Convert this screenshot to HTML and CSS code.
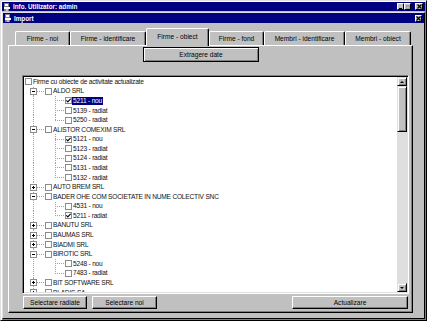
FILE: index.html
```html
<!DOCTYPE html>
<html lang="ro">
<head>
  <meta charset="UTF-8">
  <title>Import</title>
  <link rel="stylesheet" href="styles.css">
</head>
<body>
  <div class="app">
    <div class="titlebar main">
      <svg class="ticon" width="8" height="8" viewBox="0 0 8 8">
        <rect x="1" y="0" width="5" height="8" fill="#808080"/>
        <rect x="2" y="1" width="3" height="2" fill="#fff"/>
        <rect x="1" y="4" width="6" height="2" fill="#fff"/>
        <rect x="3" y="6" width="2" height="2" fill="#c0c0c0"/>
      </svg>
      <span>Info. Utilizator: admin</span>
      <div class="tbtns">
        <span class="tb"><i class="g-min"></i></span>
        <span class="tb off"><i class="g-max"></i></span>
        <span class="tb x">
          <svg width="5" height="5" viewBox="0 0 5 5"><path d="M0.5 0.5 L4.5 4.5 M4.5 0.5 L0.5 4.5" stroke="#000" stroke-width="1.2"/></svg>
        </span>
      </div>
    </div>

    <div class="child">
      <div class="titlebar sub">
        <svg class="ticon" width="8" height="8" viewBox="0 0 8 8">
          <rect x="1" y="0" width="5" height="8" fill="#808080"/>
          <rect x="2" y="1" width="3" height="2" fill="#fff"/>
          <rect x="1" y="4" width="6" height="2" fill="#fff"/>
          <rect x="3" y="6" width="2" height="2" fill="#c0c0c0"/>
        </svg>
        <span>Import</span>
        <div class="tbtns">
          <span class="tb">
            <svg width="5" height="5" viewBox="0 0 5 5"><path d="M0.5 0.5 L4.5 4.5 M4.5 0.5 L0.5 4.5" stroke="#000" stroke-width="1.2"/></svg>
          </span>
        </div>
      </div>

      <div class="content">
        <div class="tabs">
          <div class="tab t1">Firme - noi</div>
          <div class="tab t2">Firme - identificare</div>
          <div class="tab t3 active">Firme - obiect</div>
          <div class="tab t4">Firme - fond</div>
          <div class="tab t5">Membri - identificare</div>
          <div class="tab t6">Membri - obiect</div>
        </div>

        <div class="panel">
          <button class="btn default extract">Extragere date</button>

          <div class="listbox">
            <div class="tree">
              <div class="row"><span class="cb root"></span><span class="lbl">Firme cu obiecte de activitate actualizate</span></div>

              <div class="row"><span class="ga br"><span class="exp"></span></span><span class="cb"></span><span class="lbl">ALDO SRL</span></div>
              <div class="row"><span class="ga"></span><span class="gb"></span><span class="cb on"><svg width="5" height="5" viewBox="0 0 5 5"><path d="M0.3 2.3 L1.8 3.9 L4.7 0.8" stroke="#000" stroke-width="1.2" fill="none"/></svg></span><span class="lbl sel">5211 - nou</span></div>
              <div class="row"><span class="ga"></span><span class="gb"></span><span class="cb"></span><span class="lbl">5139 - radiat</span></div>
              <div class="row"><span class="ga"></span><span class="gb end"></span><span class="cb"></span><span class="lbl">5250 - radiat</span></div>

              <div class="row"><span class="ga br"><span class="exp"></span></span><span class="cb"></span><span class="lbl">ALISTOR COMEXIM SRL</span></div>
              <div class="row"><span class="ga"></span><span class="gb"></span><span class="cb on"><svg width="5" height="5" viewBox="0 0 5 5"><path d="M0.3 2.3 L1.8 3.9 L4.7 0.8" stroke="#000" stroke-width="1.2" fill="none"/></svg></span><span class="lbl">5121 - nou</span></div>
              <div class="row"><span class="ga"></span><span class="gb"></span><span class="cb"></span><span class="lbl">5123 - radiat</span></div>
              <div class="row"><span class="ga"></span><span class="gb"></span><span class="cb"></span><span class="lbl">5124 - radiat</span></div>
              <div class="row"><span class="ga"></span><span class="gb"></span><span class="cb"></span><span class="lbl">5131 - radiat</span></div>
              <div class="row"><span class="ga"></span><span class="gb end"></span><span class="cb"></span><span class="lbl">5132 - radiat</span></div>

              <div class="row"><span class="ga br"><span class="exp plus"></span></span><span class="cb"></span><span class="lbl">AUTO BREM SRL</span></div>

              <div class="row"><span class="ga br"><span class="exp"></span></span><span class="cb"></span><span class="lbl">BADER OHE COM SOCIETATE IN NUME COLECTIV SNC</span></div>
              <div class="row"><span class="ga"></span><span class="gb"></span><span class="cb"></span><span class="lbl">4531 - nou</span></div>
              <div class="row"><span class="ga"></span><span class="gb end"></span><span class="cb on"><svg width="5" height="5" viewBox="0 0 5 5"><path d="M0.3 2.3 L1.8 3.9 L4.7 0.8" stroke="#000" stroke-width="1.2" fill="none"/></svg></span><span class="lbl">5211 - radiat</span></div>

              <div class="row"><span class="ga br"><span class="exp plus"></span></span><span class="cb"></span><span class="lbl">BANUTU SRL</span></div>
              <div class="row"><span class="ga br"><span class="exp plus"></span></span><span class="cb"></span><span class="lbl">BAUMAS SRL</span></div>
              <div class="row"><span class="ga br"><span class="exp plus"></span></span><span class="cb"></span><span class="lbl">BIADMI SRL</span></div>

              <div class="row"><span class="ga br"><span class="exp"></span></span><span class="cb"></span><span class="lbl">BIROTIC SRL</span></div>
              <div class="row"><span class="ga"></span><span class="gb"></span><span class="cb"></span><span class="lbl">5248 - nou</span></div>
              <div class="row"><span class="ga"></span><span class="gb end"></span><span class="cb"></span><span class="lbl">7483 - radiat</span></div>

              <div class="row"><span class="ga br"><span class="exp plus"></span></span><span class="cb"></span><span class="lbl">BIT SOFTWARE SRL</span></div>
              <div class="row"><span class="ga br"><span class="exp plus"></span></span><span class="cb"></span><span class="lbl">BLADIS SA</span></div>
            </div>

            <div class="scrollbar">
              <span class="sbtn"><i class="arr up"></i></span>
              <span class="thumb"></span>
              <span class="track"></span>
              <span class="sbtn"><i class="arr down"></i></span>
            </div>
          </div>

          <div class="actions">
            <button class="btn w-rad">Selectare radiate</button>
            <button class="btn w-noi">Selectare noi</button>
            <button class="btn w-act">Actualizare</button>
          </div>
        </div>
      </div>
    </div>
  </div>
</body>
</html>
```

FILE: styles.css
```css
* {
  box-sizing: border-box;
}

body {
  margin: 0;
  background: #c0c0c0;
  font-family: "Liberation Sans", Arial, sans-serif;
  font-size: 6.6px;
  color: #000;
  overflow: hidden;
}

.app {
  width: 427px;
  height: 321px;
  display: flex;
  flex-direction: column;
  border: 1px solid;
  border-color: #dfdfdf #000 #000 #dfdfdf;
  box-shadow: inset 1px 1px #fff, inset -1px -1px #808080;
  padding: 1px;
}

/* title bars */
.titlebar {
  display: flex;
  align-items: center;
  background: #000080;
  color: #fff;
  font-weight: bold;
  font-size: 6.3px;
  padding: 0 2px 0 1px;
}
.titlebar.main {
  height: 9px;
}
.titlebar.sub {
  height: 10px;
}
.ticon {
  margin-right: 2px;
  flex: none;
}
.tbtns {
  margin-left: auto;
  display: flex;
  align-items: center;
}
.tb {
  width: 7px;
  height: 7px;
  background: #c0c0c0;
  border: 1px solid;
  border-color: #fff #000 #000 #fff;
  display: flex;
  align-items: center;
  justify-content: center;
}
.tb.x {
  width: 8px;
  margin-left: 4px;
}
.g-min {
  width: 3px;
  height: 1px;
  background: #000;
  margin-top: 3px;
}
.g-max {
  width: 4px;
  height: 4px;
  border: 1px solid #a0a0a0;
  border-top-width: 2px;
}

/* import window */
.child {
  flex: 1;
  min-height: 0;
  margin-top: 1px;
  display: flex;
  flex-direction: column;
  border: 1px solid;
  border-color: #dfdfdf #000 #000 #dfdfdf;
}
.content {
  flex: 1;
  min-height: 0;
  display: flex;
  flex-direction: column;
  padding: 5px 11px 5px 5px;
}

/* tabs */
.tabs {
  height: 17px;
  display: flex;
  align-items: flex-end;
  padding-left: 7px;
}
.tab {
  height: 14px;
  line-height: 13px;
  text-align: center;
  white-space: nowrap;
  border: 1px solid;
  border-bottom: 0;
  border-color: #fff #000 #000 #fff;
  box-shadow: inset -1px 0 #808080;
  border-radius: 2px 2px 0 0;
  background: #c0c0c0;
}
.tab.active {
  height: 18px;
  line-height: 15px;
  margin-bottom: -1px;
  position: relative;
  z-index: 1;
}
.t1 { width: 55px; }
.t2 { width: 76px; }
.t3 { width: 63px; }
.t4 { width: 55px; }
.t5 { width: 81px; }
.t6 { width: 66px; }

.panel {
  flex: 1;
  min-height: 0;
  display: flex;
  flex-direction: column;
  border: 1px solid;
  border-color: #fff #000 #000 #fff;
  box-shadow: inset -1px -1px #808080;
  padding: 1px 0 3px 0;
}

/* buttons */
.btn {
  font: inherit;
  color: #000;
  background: #c0c0c0;
  border: 1px solid;
  border-color: #fff #000 #000 #fff;
  box-shadow: inset -1px -1px #808080;
  padding: 0;
  height: 13px;
  line-height: 10px;
  white-space: nowrap;
  flex: none;
}
.btn.default {
  border-color: #000;
  box-shadow: inset 1px 1px #fff, inset -1px -1px #808080;
}
.extract {
  width: 116px;
  height: 15px;
  margin-left: 134px;
}

/* tree list */
.listbox {
  flex: 1;
  min-height: 0;
  display: flex;
  margin: 13px 3px 0 13px;
  border: 1px solid;
  border-color: #808080 #fff #fff #808080;
  box-shadow: inset 1px 1px #000, inset -1px -1px #dfdfdf;
  padding: 1px;
  background: #fff;
  overflow: hidden;
}
.tree {
  flex: 1;
  overflow: hidden;
  letter-spacing: -0.2px;
  color: #111;
}
.row {
  height: 9.58px;
  display: flex;
  align-items: center;
  white-space: nowrap;
}
.cb {
  width: 7px;
  height: 7px;
  flex: none;
  border: 1px solid #8c8c8c;
  background: #fff;
  display: flex;
  align-items: center;
  justify-content: center;
}
.cb.root {
  margin-left: 1px;
}
.lbl {
  line-height: 8px;
  padding: 0 1px;
}
.lbl.sel {
  background: #000080;
  color: #fff;
}

.ga,
.gb {
  align-self: stretch;
  flex: none;
  display: flex;
  align-items: center;
  background-repeat: no-repeat;
}
.ga {
  width: 21px;
  background-image: repeating-linear-gradient(#a0a0a0 0 1px, transparent 1px 2px);
  background-position: 9px 0;
  background-size: 1px 100%;
}
.ga.br {
  background-image: repeating-linear-gradient(#a0a0a0 0 1px, transparent 1px 2px),
    repeating-linear-gradient(90deg, #a0a0a0 0 1px, transparent 1px 2px);
  background-position: 9px 0, 9px 50%;
  background-size: 1px 100%, 12px 1px;
}
.gb {
  width: 20px;
  background-image: repeating-linear-gradient(#a0a0a0 0 1px, transparent 1px 2px),
    repeating-linear-gradient(90deg, #a0a0a0 0 1px, transparent 1px 2px);
  background-position: 10px 0, 10px 50%;
  background-size: 1px 100%, 10px 1px;
}
.gb.end {
  background-size: 1px 50%, 10px 1px;
}
.exp {
  width: 7px;
  height: 7px;
  margin-left: 6px;
  border: 1px solid #8c8c8c;
  background: linear-gradient(#000, #000) center / 3px 1px no-repeat, #fff;
}
.exp.plus {
  background: linear-gradient(#000, #000) center / 3px 1px no-repeat,
    linear-gradient(#000, #000) center / 1px 3px no-repeat, #fff;
}

/* scrollbar */
.scrollbar {
  width: 10px;
  flex: none;
  display: flex;
  flex-direction: column;
  background: #dedede;
}
.sbtn,
.thumb {
  flex: none;
  background: #c0c0c0;
  border: 1px solid;
  border-color: #dfdfdf #000 #000 #dfdfdf;
  box-shadow: inset 1px 1px #fff, inset -1px -1px #808080;
}
.sbtn {
  height: 9px;
  display: flex;
  align-items: center;
  justify-content: center;
}
.thumb {
  height: 46px;
}
.track {
  flex: 1;
}
.arr {
  width: 0;
  height: 0;
  border-left: 2px solid transparent;
  border-right: 2px solid transparent;
}
.arr.up {
  border-bottom: 2px solid #000;
}
.arr.down {
  border-top: 2px solid #000;
}

/* bottom buttons */
.actions {
  display: flex;
  gap: 5px;
  margin: 2px 4px 0 14px;
}
.w-rad { width: 64px; }
.w-noi { width: 65px; }
.w-act {
  width: 116px;
  margin-left: auto;
}
```
